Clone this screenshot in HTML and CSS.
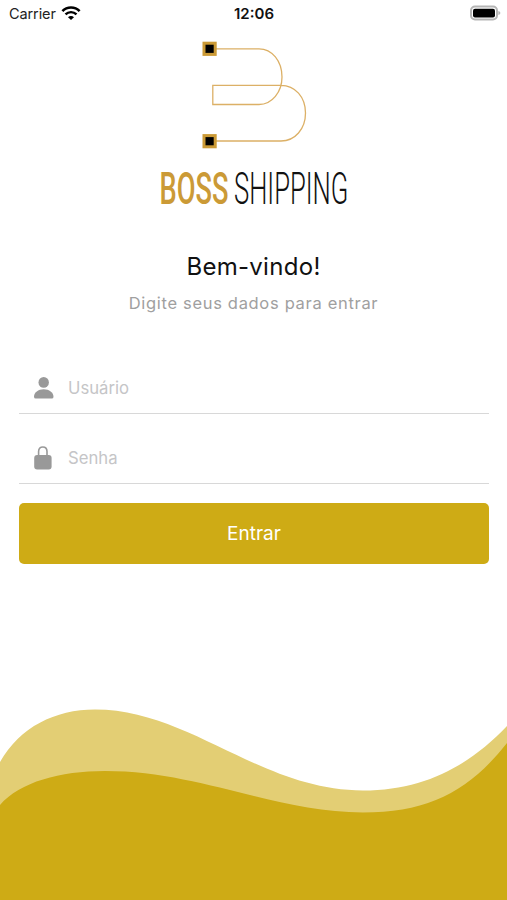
FILE: index.html
```
<!DOCTYPE html>
<html lang="pt-BR">
<head>
    <meta charset="UTF-8">
    <meta name="viewport" content="width=device-width, initial-scale=1.0">
    <title>Boss Shipping</title>
    <link rel="stylesheet" href="styles.css">
</head>
<body>
    <div class="status-bar">
        <div class="carrier">
            <span>Carrier</span>
            <svg class="wifi" width="20" height="15" viewBox="0 0 20 15">
                <path d="M1.4 5.2 A12 12 0 0 1 18.6 5.2" fill="none" stroke="#000" stroke-width="2.6"/>
                <path d="M4.5 8.4 A7.7 7.7 0 0 1 15.5 8.4" fill="none" stroke="#000" stroke-width="2.4"/>
                <path d="M10 14 L7 11.2 A4.2 4.2 0 0 1 13 11.2 Z"/>
            </svg>
        </div>
        <span class="clock">12:06</span>
        <svg class="battery" width="32" height="16" viewBox="0 0 32 16">
            <rect x="2" y="1.6" width="26" height="12.8" rx="4" fill="#fff" stroke="#b5b5b5" stroke-width="2"/>
            <rect x="4" y="3.7" width="22" height="8.8" rx="2"/>
            <path d="M29.3 6 Q31.4 6.5 31.4 8 Q31.4 9.5 29.3 10 Z" fill="#b5b5b5"/>
        </svg>
    </div>

    <div class="logo">
        <svg width="190" height="170" viewBox="0 0 190 170">
            <g fill="none" stroke="#dcb066" stroke-width="1.3">
                <path d="M57 10.8 H100 C113 10.8 123 23 123 39 C123 54 113 66.5 100 66.5 H53.8 V47.3 H122 C136 47.3 146.5 59 146.5 75 C146.5 91 136 103 122 103 H57"/>
            </g>
            <g fill="#000" stroke="#cb9a36" stroke-width="3">
                <rect x="45" y="5.2" width="11.2" height="11.2"/>
                <rect x="45" y="97.6" width="11.2" height="11.2"/>
            </g>
            <text class="logo-boss" transform="translate(0.6 166) scale(0.605 1)">BOSS</text>
            <text class="logo-shipping" transform="translate(75 166) scale(0.57 1)">SHIPPING</text>
        </svg>
    </div>

    <h1 class="title">Bem-vindo!</h1>
    <p class="subtitle">Digite seus dados para entrar</p>

    <form class="login-form">
        <label class="field">
            <svg width="20" height="22" viewBox="0 0 20 22" fill="#999">
                <ellipse cx="9.7" cy="5.4" rx="5.2" ry="5.4"/>
                <path d="M9.7 12.2 C15.2 12.2 19.5 15.6 19.5 19.7 Q19.5 21.6 17.7 21.6 H1.7 Q0 21.6 0 19.7 C0 15.6 4.2 12.2 9.7 12.2 Z"/>
            </svg>
            <input type="text" placeholder="Usuário">
        </label>
        <label class="field">
            <svg width="20" height="24" viewBox="0 0 20 24" fill="#999">
                <path d="M4.6 10 V5.6 C4.6 2.6 6.4 1 8.8 1 C11.2 1 13 2.6 13 5.6 V10" fill="none" stroke="#999" stroke-width="1.6"/>
                <rect x="0.2" y="8.9" width="17.4" height="14.7" rx="3"/>
            </svg>
            <input type="password" placeholder="Senha">
        </label>
        <button type="button" class="btn-entrar">Entrar</button>
    </form>

    <svg class="waves" width="507" height="200" viewBox="0 0 507 200">
        <path fill="#e3ce74" d="M0 62 C20 27 55 9.5 95 9.5 C190 9.5 260 90.5 363 90.5 C425 90.5 470 65 507 26 V200 H0 Z"/>
        <path fill="#ceab15" d="M0 105 C20 82 60 71 105 71 C200 71 275 112.5 363 112.5 C430 112.5 470 90 507 43 V200 H0 Z"/>
    </svg>
</body>
</html>
```
FILE: styles.css
```
* {
    box-sizing: border-box;
}
html, body {
    margin: 0;
    padding: 0;
    height: 100%;
    overflow: hidden;
}
body {
    display: flex;
    flex-direction: column;
    background: #fff;
    font-family: 'Inter', sans-serif;
}
.status-bar {
    display: grid;
    grid-template-columns: 1fr auto 1fr;
    align-items: center;
    height: 27px;
    padding: 0 6px 0 9px;
    font-size: 14.5px;
    color: #222;
}
.carrier {
    display: flex;
    align-items: center;
    gap: 5px;
    letter-spacing: -0.1px;
}
.wifi {
    margin-top: -1px;
}
.clock {
    margin-right: 2px;
    font-size: 15px;
    font-weight: 600;
    color: #111;
}
.battery {
    justify-self: end;
    margin-top: -1px;
}
.logo {
    display: flex;
    justify-content: center;
    height: 184px;
    padding-top: 11px;
}
.logo svg {
    overflow: visible;
}
.logo text {
    font-family: 'Roboto', sans-serif;
    font-size: 45px;
}
.logo-boss {
    font-weight: 500;
    fill: #cb9a36;
}
.logo-shipping {
    font-weight: 300;
    fill: #111;
}
.title {
    margin: 41px 0 0;
    font-size: 24px;
    font-weight: 400;
    line-height: 30px;
    letter-spacing: 0.3px;
    text-align: center;
    color: #111;
}
.subtitle {
    margin: 11px 0 0;
    font-size: 16.5px;
    line-height: 20px;
    letter-spacing: 0.68px;
    text-align: center;
    color: #a0a0a0;
}
.login-form {
    display: flex;
    flex-direction: column;
    padding: 0 18px 0 19px;
    margin-top: 31px;
}
.field {
    display: flex;
    align-items: center;
    height: 70px;
    padding: 18px 0 0 15px;
    border-bottom: 1px solid #d8d8d8;
}
.field input {
    flex: 1;
    margin-left: 14px;
    padding: 0;
    border: none;
    outline: none;
    background: none;
    font-family: inherit;
    font-size: 16.7px;
}
.field input::placeholder {
    color: #c5c5c7;
}
.btn-entrar {
    height: 61px;
    margin-top: 19px;
    border: none;
    border-radius: 5px;
    background: #ceab15;
    color: #fff;
    font-family: inherit;
    font-size: 19px;
}
.waves {
    display: block;
    margin-top: auto;
}
```
